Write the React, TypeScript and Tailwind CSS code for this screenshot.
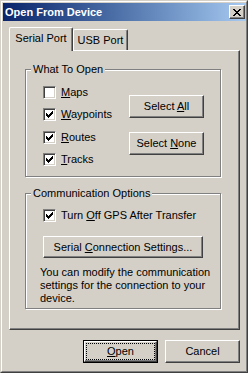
import React from "react";

const bevel =
  "border border-t-white border-l-white border-r-[#404040] border-b-[#404040] shadow-[inset_-1px_-1px_0_#808080]";

function Btn({ children, className = "" }: { children: React.ReactNode; className?: string }) {
  return (
    <div className={`flex items-center justify-center bg-[#d4d0c8] ${bevel} ${className}`}>
      {children}
    </div>
  );
}

function Check({ checked }: { checked: boolean }) {
  return (
    <div className="w-[13px] h-[13px] shrink-0 bg-white border border-t-[#808080] border-l-[#808080] border-r-white border-b-white shadow-[inset_1px_1px_0_#404040,inset_-1px_-1px_0_#d4d0c8] flex items-center justify-center">
      {checked && (
        <svg width="7" height="7" viewBox="0 0 7 7" shapeRendering="crispEdges">
          <path
            fill="#000"
            d="M6 0h1v1h-1z M5 1h2v1h-2z M0 2h1v1h-1z M4 2h3v1h-3z M0 3h2v1h-2z M3 3h3v1h-3z M0 4h5v1h-5z M1 5h3v1h-3z M2 6h1v1h-1z"
          />
        </svg>
      )}
    </div>
  );
}

function CheckRow({ checked, children, className = "" }: { checked: boolean; children: React.ReactNode; className?: string }) {
  return (
    <div className={`flex items-center h-[13px] gap-[5px] ${className}`}>
      <Check checked={checked} />
      <span className="whitespace-nowrap">{children}</span>
    </div>
  );
}

function Group({ title, className = "", children }: { title: string; className?: string; children: React.ReactNode }) {
  return (
    <div
      className={`relative border border-[#808080] shadow-[inset_1px_1px_0_white,1px_1px_0_white] ${className}`}
    >
      <span className="absolute -top-[7px] left-[5px] px-[2px] bg-[#d4d0c8] leading-[13px] whitespace-nowrap">
        {title}
      </span>
      {children}
    </div>
  );
}

export default function App() {
  return (
    <div className="w-[248px] h-[373px] bg-[#d4d0c8] border border-t-[#d4d0c8] border-l-[#d4d0c8] border-r-[#404040] border-b-[#404040] font-[family-name:Tahoma,'Liberation_Sans',sans-serif] text-[11px] leading-[13px] text-black overflow-hidden">
      <div className="h-full border border-t-white border-l-white border-r-[#808080] border-b-[#808080] pt-px pl-px flex flex-col">
        {/* Title bar */}
        <div className="h-[18px] shrink-0 flex items-center bg-linear-to-r from-[#0a246a] to-[#a6caf0]">
          <span className="pl-[2px] text-white font-bold text-[11px] whitespace-nowrap flex-1">
            Open From Device
          </span>
          <div className={`w-[16px] h-[14px] mr-px bg-[#d4d0c8] ${bevel} flex items-center justify-center`}>
            <svg width="8" height="7" viewBox="0 0 8 7" shapeRendering="crispEdges">
              <path
                fill="#000"
                d="M0 0h2v1h-2z M6 0h2v1h-2z M1 1h2v1h-2z M5 1h2v1h-2z M2 2h4v1h-4z M3 3h2v1h-2z M2 4h4v1h-4z M1 5h2v1h-2z M5 5h2v1h-2z M0 6h2v1h-2z M6 6h2v1h-2z"
              />
            </svg>
          </div>
        </div>

        {/* Body */}
        <div className="pl-[6px] pt-[6px] flex flex-col">
          {/* Tabs */}
          <div className="flex items-end h-[23px]">
            <div className="relative z-10 -mb-px h-[24px] w-[64px] bg-[#d4d0c8] border-t border-l border-r border-t-white border-l-white border-r-[#404040] shadow-[inset_-1px_0_0_#808080] rounded-t-[2px] flex items-center justify-center pb-[2px]">
              Serial Port
            </div>
            <div className="h-[21px] w-[55px] border-t border-l border-r border-t-white border-l-white border-r-[#404040] shadow-[inset_-1px_0_0_#808080] rounded-t-[2px] flex items-center justify-center">
              USB Port
            </div>
          </div>

          {/* Panel */}
          <div className={`w-[231px] h-[280px] ${bevel} flex flex-col pl-[15px]`}>
            <Group title="What To Open" className="mt-[18px] w-[196px] h-[108px] flex">
              <div className="w-[103px] pl-[17px] pt-[16px] flex flex-col">
                <CheckRow checked={false}>
                  <u>M</u>aps
                </CheckRow>
                <CheckRow checked className="mt-[9px]">
                  <u>W</u>aypoints
                </CheckRow>
                <CheckRow checked className="mt-[10px]">
                  <u>R</u>outes
                </CheckRow>
                <CheckRow checked className="mt-[9px]">
                  <u>T</u>racks
                </CheckRow>
              </div>
              <div className="pt-[25px] flex flex-col gap-[14px]">
                <Btn className="w-[75px] h-[23px]">
                  <span>
                    Select <u>A</u>ll
                  </span>
                </Btn>
                <Btn className="w-[75px] h-[23px]">
                  <span>
                    Select <u>N</u>one
                  </span>
                </Btn>
              </div>
            </Group>

            <Group title="Communication Options" className="mt-[16px] w-[196px] h-[116px] flex flex-col">
              <CheckRow checked className="ml-[17px] mt-[15px]">
                Turn <u>O</u>ff GPS After Transfer
              </CheckRow>
              <Btn className="ml-[17px] mt-[14px] w-[160px] h-[22px]">
                <span className="whitespace-nowrap">
                  Serial <u>C</u>onnection Settings...
                </span>
              </Btn>
              <p className="ml-[14px] mt-[8px] w-[172px]">
                You can modify the communication settings for the connection to your device.
              </p>
            </Group>
          </div>

          {/* Bottom buttons */}
          <div className="w-[231px] mt-[10px] flex justify-end gap-[7px]">
            <div className="w-[75px] h-[23px] border border-black flex">
              <div className="flex-1 border border-t-white border-l-white border-r-[#404040] border-b-[#404040] shadow-[inset_-1px_-1px_0_#808080] p-px flex">
                <div className="flex-1 border border-dotted border-black flex items-center justify-center">
                  <span>
                    <u>O</u>pen
                  </span>
                </div>
              </div>
            </div>
            <Btn className="w-[75px] h-[23px]">Cancel</Btn>
          </div>
        </div>
      </div>
    </div>
  );
}
